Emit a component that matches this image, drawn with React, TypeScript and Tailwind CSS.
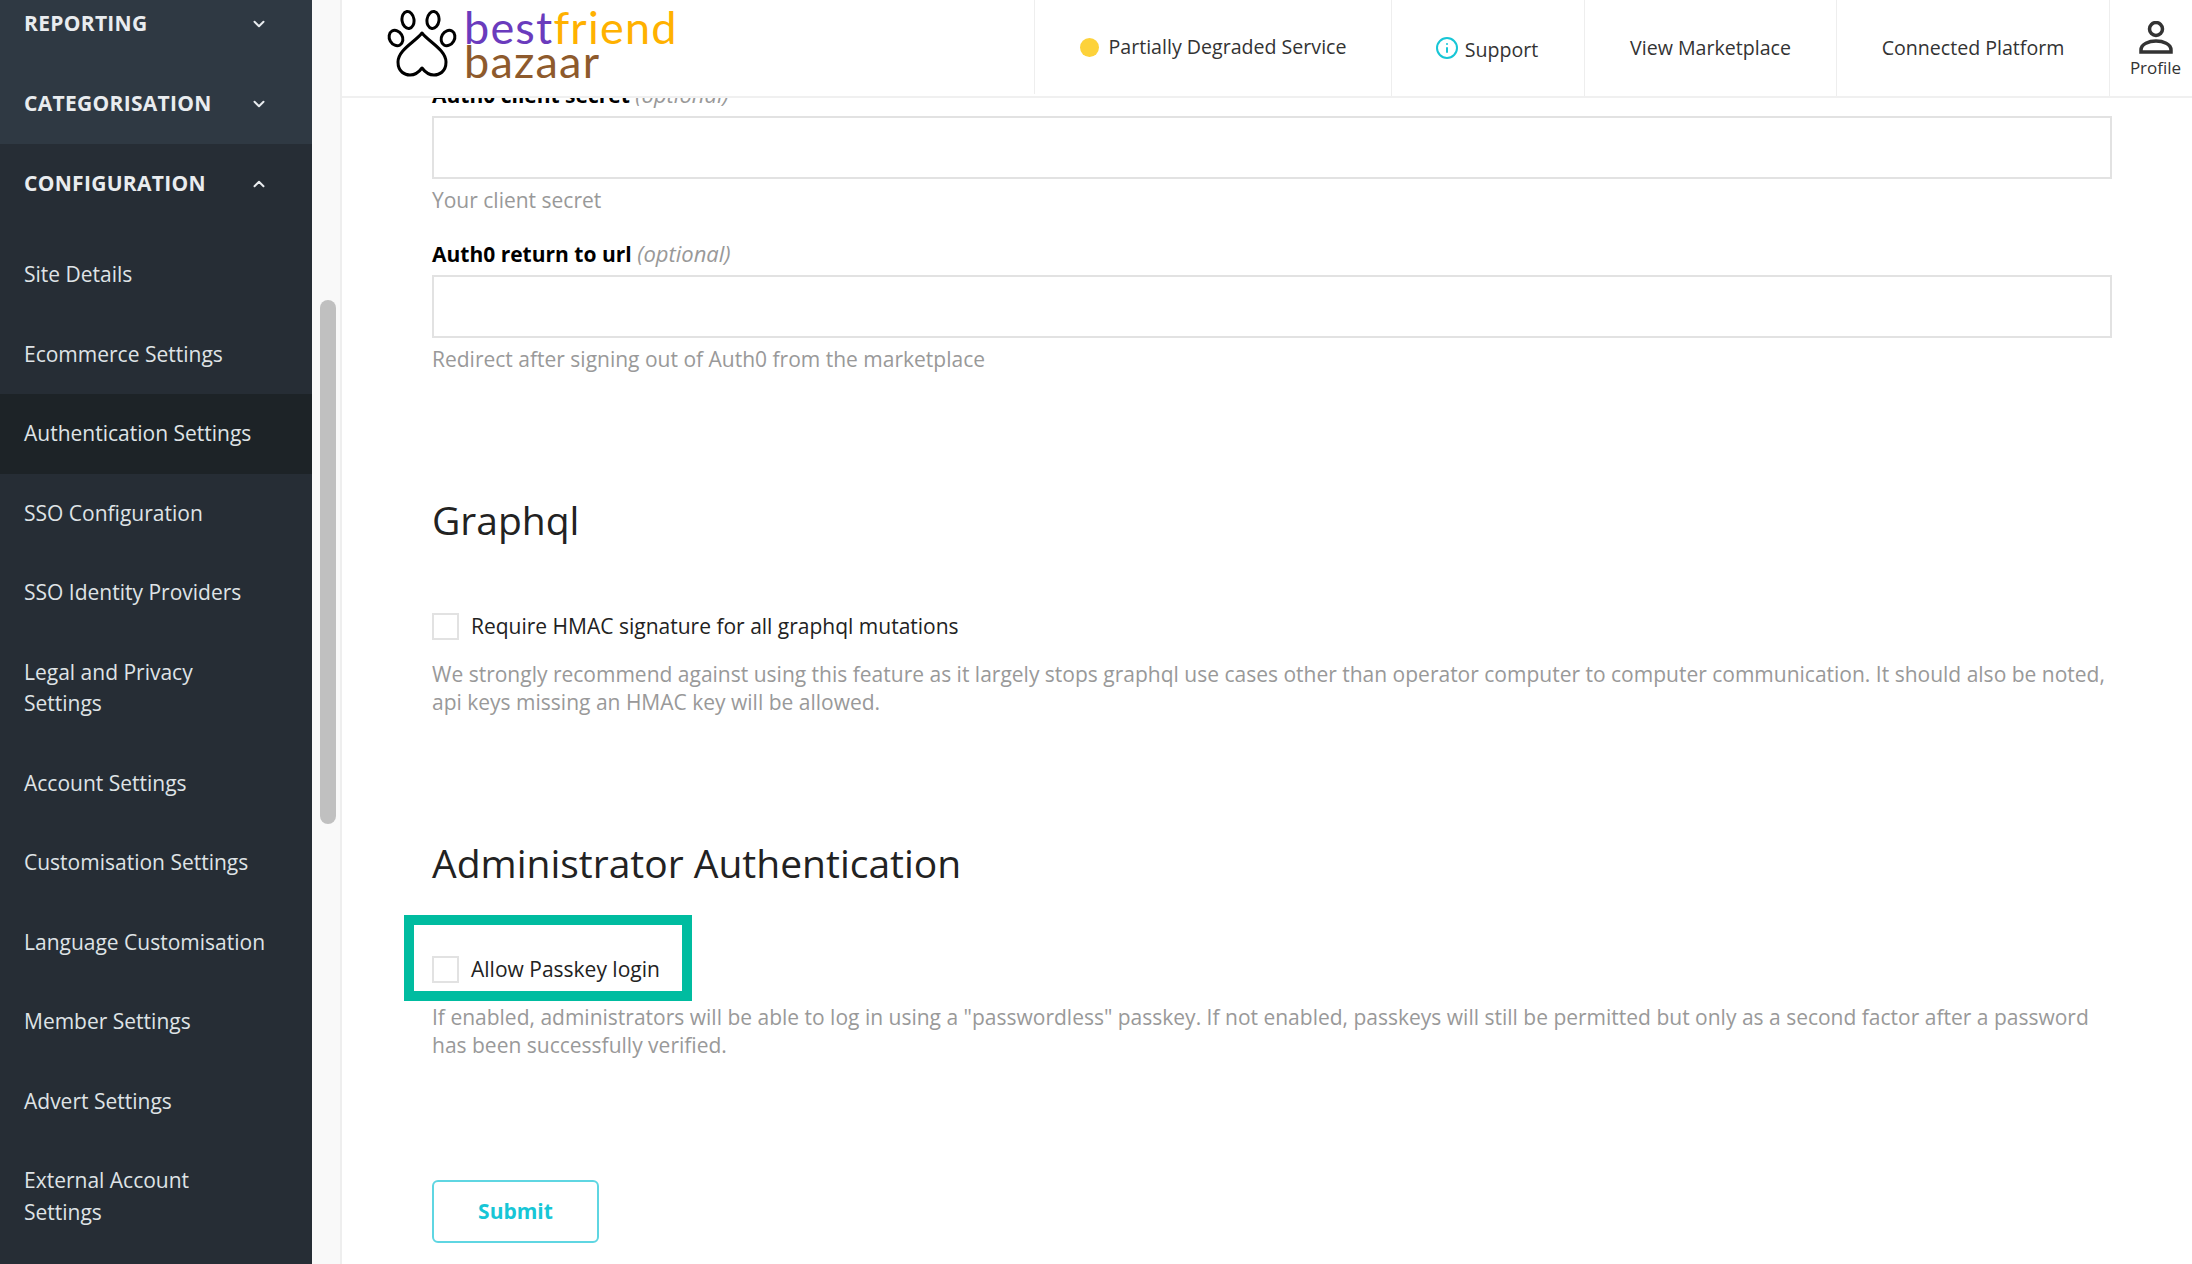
import { ChevronDown, ChevronUp, Info } from "lucide-react";

const NAV_GROUPS = ["REPORTING", "CATEGORISATION"];

const CONFIG_LINKS = [
  "Site Details",
  "Ecommerce Settings",
  "Authentication Settings",
  "SSO Configuration",
  "SSO Identity Providers",
  "Legal and Privacy Settings",
  "Account Settings",
  "Customisation Settings",
  "Language Customisation",
  "Member Settings",
  "Advert Settings",
  "External Account Settings",
];

function Logo() {
  return (
    <div className="mt-[10px] flex items-start self-start">
      <svg width="70" height="67" viewBox="0 0 70 67" fill="none" stroke="#000" strokeWidth="3">
        <ellipse cx="21" cy="10" rx="6" ry="8.5" transform="rotate(-8 21 10)" />
        <ellipse cx="46" cy="10" rx="6" ry="8.5" transform="rotate(8 46 10)" />
        <ellipse cx="9" cy="28" rx="6.5" ry="8" transform="rotate(-30 9 28)" />
        <ellipse cx="61" cy="28" rx="6.5" ry="8" transform="rotate(30 61 28)" />
        <path
          d="M35 23 C28 32 11 40 11 52 C11 62 18 65 23 65 C28 65 32 62 35 58 C38 62 42 65 47 65 C52 65 59 62 59 52 C59 40 42 32 35 23 Z"
          strokeLinejoin="round"
        />
      </svg>
      <div className="ml-[7px] font-['Lato',sans-serif] text-[45px] leading-[34px] tracking-[1.2px]">
        <div>
          <span className="text-[#6a3bbd]">best</span>
          <span className="text-[#ffb100]">friend</span>
        </div>
        <div className="text-[#8e5a2c]">bazaar</div>
      </div>
    </div>
  );
}

function Sidebar() {
  return (
    <aside className="w-[312px] shrink-0 overflow-hidden bg-[#262d35] text-[#e9ecef]">
      <div className="-mt-[16px] bg-[#2f3943]">
        {NAV_GROUPS.map((label) => (
          <div key={label} className="flex h-[80px] items-center justify-between pl-6 pr-[44px] text-[21px] font-bold tracking-[0.3px]">
            {label}
            <ChevronDown size={18} strokeWidth={2.6} />
          </div>
        ))}
      </div>
      <div className="flex h-[80px] items-center justify-between pl-6 pr-[44px] text-[21px] font-bold tracking-[0.3px]">
        CONFIGURATION
        <ChevronUp size={18} strokeWidth={2.6} />
      </div>
      <nav className="pt-[11px] text-[21px] leading-[31.5px] text-[#dfe3e6]">
        {CONFIG_LINKS.map((link) => (
          <div
            key={link}
            className={`py-[24px] pl-6 pr-10 ${link === "Authentication Settings" ? "bg-[#1d2327]" : ""}`}
          >
            {link}
          </div>
        ))}
      </nav>
    </aside>
  );
}

function Header() {
  return (
    <header className="flex h-[98px] shrink-0 items-stretch justify-between border-b-2 border-[#f0f0f0] bg-white pl-[45px]">
      <Logo />
      <div className="flex text-[19.6px] text-[#333333]">
        <div className="flex h-[94px] w-[357px] items-center justify-center gap-[10px] border-l border-[#eeeeee]">
          <span className="h-[19px] w-[19px] rounded-full bg-[#fdd23a]" />
          Partially Degraded Service
        </div>
        <div className="flex w-[193px] items-center justify-center gap-[6px] border-l border-[#eeeeee] pr-[3px]">
          <Info size={24} strokeWidth={2} className="text-[#17c6d6]" />
          <span className="mt-[3px]">Support</span>
        </div>
        <div className="flex w-[252px] items-center justify-center border-l border-[#eeeeee]">View Marketplace</div>
        <div className="flex w-[273px] items-center justify-center border-l border-[#eeeeee]">Connected Platform</div>
        <div className="flex w-[83px] flex-col items-center border-l border-[#eeeeee] pl-[9px] pt-[21px] text-[17px] leading-[24px]">
          <svg width="34" height="33" viewBox="0 0 34 33" fill="none" stroke="#333" strokeWidth="3.5" className="shrink-0">
            <circle cx="17" cy="8" r="6.5" />
            <path d="M2 31 V29 C2 23 10 20 17 20 C24 20 32 23 32 29 V31 Z" />
          </svg>
          <span className="mt-[2px]">Profile</span>
        </div>
      </div>
    </header>
  );
}

function TextField({ label, help, clipped }: { label: string; help: string; clipped?: boolean }) {
  return (
    <div className={clipped ? "-mt-[18px]" : "mt-[25px]"}>
      <div className="h-[28px] text-[21px] font-bold leading-[28px] text-black">
        {label} <span className="text-[22px] font-normal italic text-[#999999]">(optional)</span>
      </div>
      <div className="mt-[8px] h-[63px] border-2 border-[#e2e2e2] bg-white" />
      <div className="mt-[7px] text-[21px] leading-[28px] text-[#999999]">{help}</div>
    </div>
  );
}

function CheckboxRow({ label }: { label: string }) {
  return (
    <div className="flex items-center text-[21px] leading-[28px] text-[#222222]">
      <span className="h-[27px] w-[27px] border-2 border-[#e2e2e2] bg-white" />
      <span className="ml-[12px]">{label}</span>
    </div>
  );
}

export default function App() {
  return (
    <div className="flex h-[1264px] w-[2192px] overflow-hidden bg-white font-['Open_Sans',sans-serif]">
      <Sidebar />
      <div className="relative w-[30px] shrink-0 border-r-2 border-[#eeeeee] bg-[#f9f9f9]">
        <div className="absolute left-[8px] top-[300px] h-[524px] w-[16px] rounded-full bg-[#c0c0c0]" />
      </div>
      <div className="flex min-w-0 flex-1 flex-col">
        <Header />
        <main className="min-h-0 flex-1 overflow-hidden pl-[90px] pr-[80px]">
          <TextField clipped label="Auth0 client secret" help="Your client secret" />
          <TextField label="Auth0 return to url" help="Redirect after signing out of Auth0 from the marketplace" />

          <h2 className="mt-[121px] text-[39px] leading-[52px] text-[#222222]">Graphql</h2>
          <div className="mt-[66px]">
            <CheckboxRow label="Require HMAC signature for all graphql mutations" />
          </div>
          <p className="mt-[20px] text-[21px] leading-[28px] text-[#999999]">
            We strongly recommend against using this feature as it largely stops graphql use cases other than operator computer to computer communication. It should also be noted, api keys missing an HMAC key will be allowed.
          </p>

          <h2 className="mt-[121px] text-[39px] leading-[52px] text-[#222222]">Administrator Authentication</h2>
          <div className="relative mt-[66px]">
            <div className="absolute -left-[28px] -top-[40px] h-[86px] w-[288px] border-[10px] border-[#00bca0]" />
            <CheckboxRow label="Allow Passkey login" />
          </div>
          <p className="mt-[20px] text-[21px] leading-[28px] text-[#999999]">
            If enabled, administrators will be able to log in using a "passwordless" passkey. If not enabled, passkeys will still be permitted but only as a second factor after a password has been successfully verified.
          </p>

          <button className="mt-[121px] h-[63px] w-[167px] rounded-[6px] border-2 border-[#5fd6e2] text-[21px] font-bold text-[#17c6d6]">
            Submit
          </button>
        </main>
      </div>
    </div>
  );
}
